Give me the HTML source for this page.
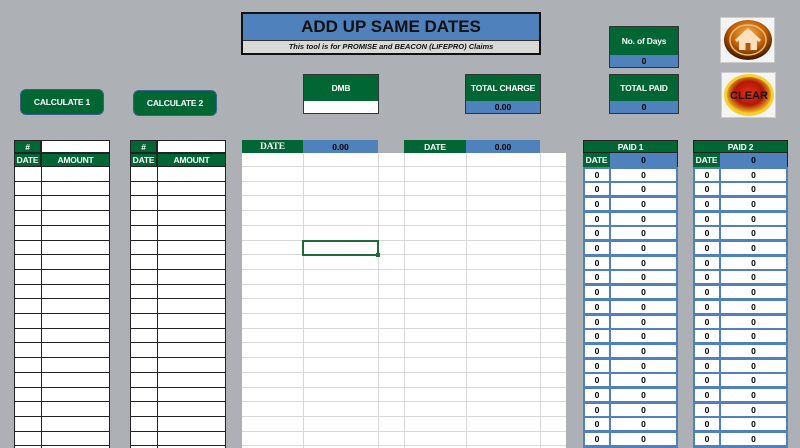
<!DOCTYPE html>
<html><head><meta charset="utf-8"><style>
*{margin:0;padding:0;box-sizing:border-box}
body{width:800px;height:448px;background:#adb1b6;position:relative;overflow:hidden;font-family:"Liberation Sans",sans-serif;font-weight:bold}
.a{position:absolute}
.g{background:#006633;color:#fff;font-size:8.5px;display:flex;align-items:center;justify-content:center;white-space:nowrap;letter-spacing:-0.2px}
.b{background:#4f81bd;color:#000;font-size:8.5px;display:flex;align-items:center;justify-content:center}
.btn{border:1.5px solid #3a5f8a;border-radius:6px;background:#006633;color:#fff;font-size:8.5px;display:flex;align-items:center;justify-content:center;letter-spacing:-0.2px}
</style></head><body>
<div class="a" style="left:241px;top:12px;width:300px;height:43px;border:2px solid #111;background:#d9d9d9">
 <div style="height:27px;background:#4f81bd;border-bottom:1px solid #333;font-size:17px;display:flex;align-items:center;justify-content:center;color:#111">ADD UP SAME DATES</div>
 <div style="font-size:7.5px;font-style:italic;text-align:center;line-height:12px;color:#111">This tool is for PROMISE and BEACON (LIFEPRO) Claims</div>
</div>
<div class="a btn" style="left:20px;top:89px;width:84px;height:26px">CALCULATE 1</div>
<div class="a btn" style="left:133px;top:90px;width:84px;height:26px">CALCULATE 2</div>
<div class="a" style="left:303px;top:74px;width:76px;height:40px;border:1px solid #333">
 <div class="g" style="height:26px">DMB</div><div style="height:12px;background:#fff"></div></div>
<div class="a" style="left:465px;top:74px;width:76px;height:40px;border:1px solid #333">
 <div class="g" style="height:26px">TOTAL CHARGE</div><div class="b" style="height:12px">0.00</div></div>
<div class="a" style="left:609px;top:26px;width:70px;height:42px;border:1px solid #333">
 <div class="g" style="height:28px">No. of Days</div><div class="b" style="height:12px">0</div></div>
<div class="a" style="left:609px;top:74px;width:70px;height:40px;border:1px solid #333">
 <div class="g" style="height:26px">TOTAL PAID</div><div class="b" style="height:12px">0</div></div>
<div class="a" style="left:720px;top:17px;width:55px;height:46px;background:#f4f4f4;border:1px solid #ccc;display:flex;align-items:center;justify-content:center">
 <svg width="50" height="42" viewBox="0 0 50 42"><defs><radialGradient id="o" cx="50%" cy="35%" r="60%"><stop offset="0" stop-color="#f5b050"/><stop offset="0.6" stop-color="#c06008"/><stop offset="1" stop-color="#4a2000"/></radialGradient></defs><ellipse cx="25" cy="21" rx="24" ry="20" fill="url(#o)"/><ellipse cx="25" cy="21" rx="18" ry="15" fill="none" stroke="#f8b868" stroke-width="1.5"/><path d="M13 22 L25 11 L37 22" fill="none" stroke="#fbe0c0" stroke-width="3"/><path d="M16 21 V31 H34 V21 L25 13 Z" fill="#fbe0c0"/><rect x="22.5" y="24" width="5" height="7" fill="#b05a10"/></svg></div>
<div class="a" style="left:721px;top:72px;width:55px;height:46px;background:#f4f4f4;border:1px solid #ccc;display:flex;align-items:center;justify-content:center">
 <svg width="52" height="44" viewBox="0 0 52 44"><defs><radialGradient id="r" cx="50%" cy="45%" r="55%"><stop offset="0" stop-color="#e83010"/><stop offset="0.6" stop-color="#b01808"/><stop offset="1" stop-color="#f0c020"/></radialGradient></defs><ellipse cx="26" cy="22" rx="25" ry="21" fill="#f2d030"/><ellipse cx="26" cy="22" rx="22" ry="18" fill="url(#r)"/><text x="26" y="26" text-anchor="middle" font-family="Liberation Sans" font-weight="bold" font-size="11" fill="#111">CLEAR</text></svg></div>
<div id="c"></div>
<script>
var h='',R=14.7,y0=167,N=19;
function d(s){h+=s}
[[14,41,110],[130,157,226]].forEach(function(t){
 var x0=t[0],x1=t[1],x2=t[2];
 d('<div class="a g" style="left:'+x0+'px;top:140px;width:'+(x1-x0)+'px;height:13px;border:1px solid #222">#</div>');
 d('<div class="a" style="left:'+x1+'px;top:140px;width:'+(x2-x1)+'px;height:13px;background:#fff;border:1px solid #222"></div>');
 d('<div class="a g" style="left:'+x0+'px;top:153px;width:'+(x1-x0)+'px;height:14px;border:1px solid #222">DATE</div>');
 d('<div class="a g" style="left:'+x1+'px;top:153px;width:'+(x2-x1)+'px;height:14px;border:1px solid #222">AMOUNT</div>');
 d('<div class="a" style="left:'+x0+'px;top:167px;width:'+(x2-x0)+'px;height:281px;background:#fff;border-left:1px solid #222;border-right:1px solid #222"></div>');
 d('<div class="a" style="left:'+x1+'px;top:167px;width:1px;height:281px;background:#222"></div>');
 for(var i=1;i<=N;i++)d('<div class="a" style="left:'+x0+'px;top:'+(y0+i*R-1).toFixed(1)+'px;width:'+(x2-x0)+'px;height:1px;background:#222"></div>');
});
d('<div class="a" style="left:242px;top:153px;width:324px;height:295px;background:#fff"></div>');
[303,378,404,466,540].forEach(function(x){d('<div class="a" style="left:'+x+'px;top:153px;width:1px;height:295px;background:#d8d8d8"></div>')});
for(var i=0;i<=N;i++)d('<div class="a" style="left:242px;top:'+(y0+i*R-1).toFixed(1)+'px;width:324px;height:1px;background:#d8d8d8"></div>');
d('<div class="a g" style="left:242px;top:140px;width:61px;height:13px;font-family:Liberation Serif,serif;font-size:9.5px">DATE</div><div class="a b" style="left:303px;top:140px;width:75px;height:13px">0.00</div>');
d('<div class="a g" style="left:404px;top:140px;width:62px;height:13px">DATE</div><div class="a b" style="left:466px;top:140px;width:74px;height:13px">0.00</div>');
d('<div class="a" style="left:302px;top:240px;width:77px;height:16px;border:2px solid #1e6b3a"></div><div class="a" style="left:376px;top:253px;width:4px;height:4px;background:#1e6b3a"></div>');
[[583,610,678,'PAID 1'],[693,720,788,'PAID 2']].forEach(function(t){
 var x0=t[0],x1=t[1],x2=t[2];
 d('<div class="a g" style="left:'+x0+'px;top:140px;width:'+(x2-x0)+'px;height:13px;border:1px solid #222">'+t[3]+'</div>');
 d('<div class="a g" style="left:'+x0+'px;top:153px;width:'+(x1-x0)+'px;height:14px">DATE</div><div class="a b" style="left:'+x1+'px;top:153px;width:'+(x2-x1)+'px;height:14px;border-right:1px solid #222">0</div>');
 d('<div class="a" style="left:'+x0+'px;top:167px;width:'+(x2-x0)+'px;height:281px;background:#4f81bd"></div>');
 for(var i=0;i<N;i++){var y=(y0+i*R+1.5).toFixed(1);
  d('<div class="a" style="left:'+(x0+2)+'px;top:'+y+'px;width:'+(x1-x0-3)+'px;height:12px;background:#fff;font-size:8.5px;text-align:center;line-height:12px">0</div>');
  d('<div class="a" style="left:'+(x1+1)+'px;top:'+y+'px;width:'+(x2-x1-3)+'px;height:12px;background:#fff;font-size:8.5px;text-align:center;line-height:12px">0</div>');}
});
document.getElementById('c').innerHTML=h;
</script>
</body></html>
